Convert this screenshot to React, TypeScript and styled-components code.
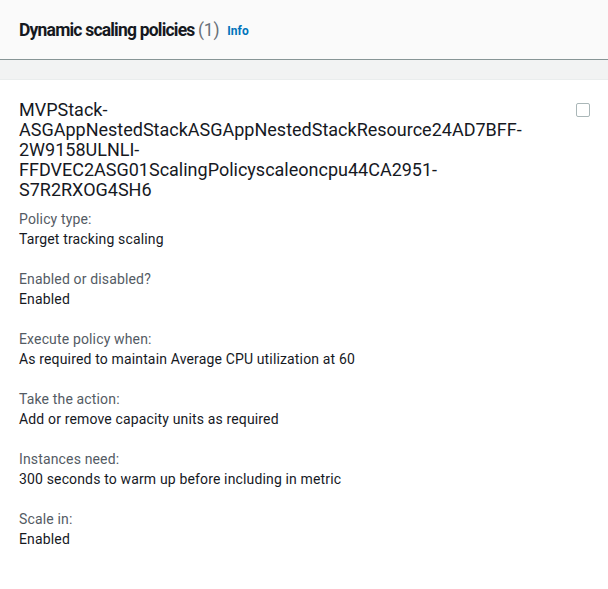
import React from "react";
import styled, { createGlobalStyle } from "styled-components";

const Global = createGlobalStyle`
  html, body { margin: 0; padding: 0; background: #ffffff; }
  body { font-family: Roboto, "Noto Sans", sans-serif; color: #16191f; }
`;

const Panel = styled.div`
  width: 608px;
  height: 589px;
  background: #ffffff;
  overflow: hidden;
`;

const Header = styled.div`
  height: 59px;
  background: #fafafa;
  border-bottom: 1px solid #879596;
  display: flex;
  align-items: center;
  gap: 8px;
  padding: 0 19px;
  box-sizing: content-box;
`;

const Title = styled.h2`
  margin: 0;
  font-size: 17.5px;
  font-weight: 700;
  color: #16191f;
  letter-spacing: -0.8px;
`;

const Count = styled.span`
  font-weight: 400;
  color: #687078;
  letter-spacing: -0.2px;
`;

const InfoLink = styled.a`
  font-size: 12px;
  font-weight: 700;
  color: #0073bb;
  text-decoration: none;
  margin-top: 3px;
`;

const Band = styled.div`
  height: 19px;
  background: #f2f3f3;
  border-bottom: 1px solid #eaeded;
`;

const Card = styled.div`
  display: flex;
  justify-content: space-between;
  padding: 20px 19px 0 19px;
`;

const Body = styled.div`
  display: flex;
  flex-direction: column;
  gap: 20px;
`;

const Name = styled.div`
  width: 515px;
  margin-bottom: -11px;
  font-size: 18px;
  line-height: 20px;
  color: #16191f;
`;

const Field = styled.div`
  display: flex;
  flex-direction: column;
  font-size: 14px;
  line-height: 20px;
  letter-spacing: 0.15px;
`;

const Label = styled.span`
  color: #545b64;
`;

const Value = styled.span`
  color: #16191f;
`;

const Check = styled.span`
  width: 12px;
  height: 12px;
  border: 1px solid #aab7b8;
  border-radius: 2px;
  margin-top: 3px;
  margin-right: -1px;
  flex: none;
`;

const fields: [string, string][] = [
  ["Policy type:", "Target tracking scaling"],
  ["Enabled or disabled?", "Enabled"],
  ["Execute policy when:", "As required to maintain Average CPU utilization at 60"],
  ["Take the action:", "Add or remove capacity units as required"],
  ["Instances need:", "300 seconds to warm up before including in metric"],
  ["Scale in:", "Enabled"],
];

export default function App() {
  return (
    <Panel>
      <Global />
      <Header>
        <Title>
          Dynamic scaling policies <Count>(1)</Count>
        </Title>
        <InfoLink>Info</InfoLink>
      </Header>
      <Band />
      <Card>
        <Body>
          <Name>
            MVPStack-ASGAppNestedStackASGAppNestedStackResource24AD7BFF-2W9158ULNLI-FFDVEC2ASG01ScalingPolicyscaleoncpu44CA2951-S7R2RXOG4SH6
          </Name>
          {fields.map(([l, v]) => (
            <Field key={l}>
              <Label>{l}</Label>
              <Value>{v}</Value>
            </Field>
          ))}
        </Body>
        <Check />
      </Card>
    </Panel>
  );
}
